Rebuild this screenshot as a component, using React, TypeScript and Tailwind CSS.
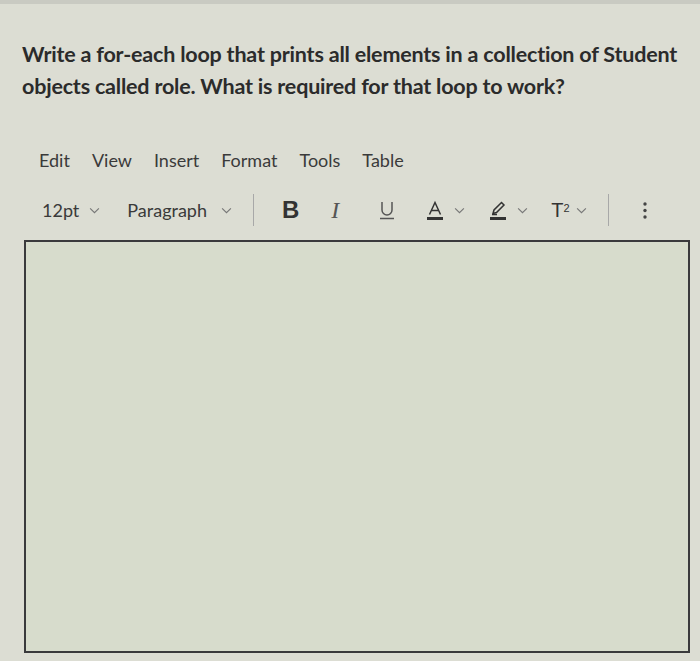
import React from 'react';

const Chevron = () => (
  <svg viewBox="0 0 12 8" className="w-[11px] h-[7px] text-[#777]" fill="none" stroke="currentColor" strokeWidth="1.3">
    <path d="M1 1.5 L6 6.5 L11 1.5" />
  </svg>
);

export default function App() {
  const menu = ['Edit', 'View', 'Insert', 'Format', 'Tools', 'Table'];

  return (
    <div className="w-[700px] h-[661px] bg-[#dcddd3] text-[#2f2f2f] overflow-hidden font-['Lato',sans-serif]">
      <div className="h-[4px] bg-[#c9cac2]" />

      {/* Question */}
      <p className="pl-[22px] pr-2 pt-[34px] text-[21.5px] leading-[32px] font-bold text-[#2b2b2b] tracking-[-0.2px]">
        Write a for-each loop that prints all elements in a collection of Student objects called role. What is required for that loop to work?
      </p>

      {/* Menu bar */}
      <div className="flex items-center gap-[22px] pl-[39px] mt-[45px] text-[18px] text-[#3a3a3a]">
        {menu.map((m) => (
          <span key={m}>{m}</span>
        ))}
      </div>

      {/* Toolbar */}
      <div className="flex items-center pl-[42px] mt-[18px] h-[36px] text-[18px] text-[#3a3a3a]">
        <span>12pt</span>
        <span className="ml-[10px]"><Chevron /></span>
        <span className="ml-[27px]">Paragraph</span>
        <span className="ml-[14px]"><Chevron /></span>
        <div className="ml-[21px] w-px h-[32px] bg-[#a8a8a8]" />
        <span className="ml-[28px] font-['Liberation_Sans',sans-serif] font-bold text-[24px] text-[#333]">B</span>
        <span className="ml-[32px] font-['Liberation_Serif',serif] italic text-[24px] text-[#555]">I</span>
        <svg viewBox="0 0 16 20" className="ml-[40px] w-[16px] h-[20px] text-[#555]" fill="none" stroke="currentColor" strokeWidth="1.5">
          <path d="M3 2 V10 A5 5 0 0 0 13 10 V2" />
          <path d="M1 18.5 H15" />
        </svg>
        <svg viewBox="0 0 18 20" className="ml-[31px] w-[18px] h-[21px] text-[#333]" fill="none" stroke="currentColor" strokeWidth="1.5">
          <path d="M3.5 14 L9 2 L14.5 14" />
          <path d="M5.5 10 H12.5" />
          <rect x="1" y="16.5" width="16" height="3" fill="currentColor" stroke="none" />
        </svg>
        <span className="ml-[10px]"><Chevron /></span>
        <svg viewBox="0 0 18 20" className="ml-[24px] w-[18px] h-[21px] text-[#333]" fill="none" stroke="currentColor" strokeWidth="1.5">
          <path d="M4 13 L5 9.5 L12.5 2 L15 4.5 L7.5 12 Z" />
          <path d="M3 14 H8" />
          <rect x="1" y="16.5" width="16" height="3" fill="currentColor" stroke="none" />
        </svg>
        <span className="ml-[10px]"><Chevron /></span>
        <span className="ml-[23px] font-['Liberation_Sans',sans-serif] text-[20px] text-[#333] leading-none">
          T<sup className="text-[11px]">2</sup>
        </span>
        <span className="ml-[6px]"><Chevron /></span>
        <div className="ml-[21px] w-px h-[32px] bg-[#a8a8a8]" />
        <svg viewBox="0 0 4 20" className="ml-[34px] w-[4px] h-[20px] text-[#444]" fill="currentColor">
          <circle cx="2" cy="4" r="1.7" />
          <circle cx="2" cy="10.5" r="1.7" />
          <circle cx="2" cy="17" r="1.7" />
        </svg>
      </div>

      {/* Editor area */}
      <div className="ml-[24px] mt-[12px] w-[666px] h-[413px] border-2 border-[#3a3a3c] bg-[#d7dccc]" />
    </div>
  );
}
